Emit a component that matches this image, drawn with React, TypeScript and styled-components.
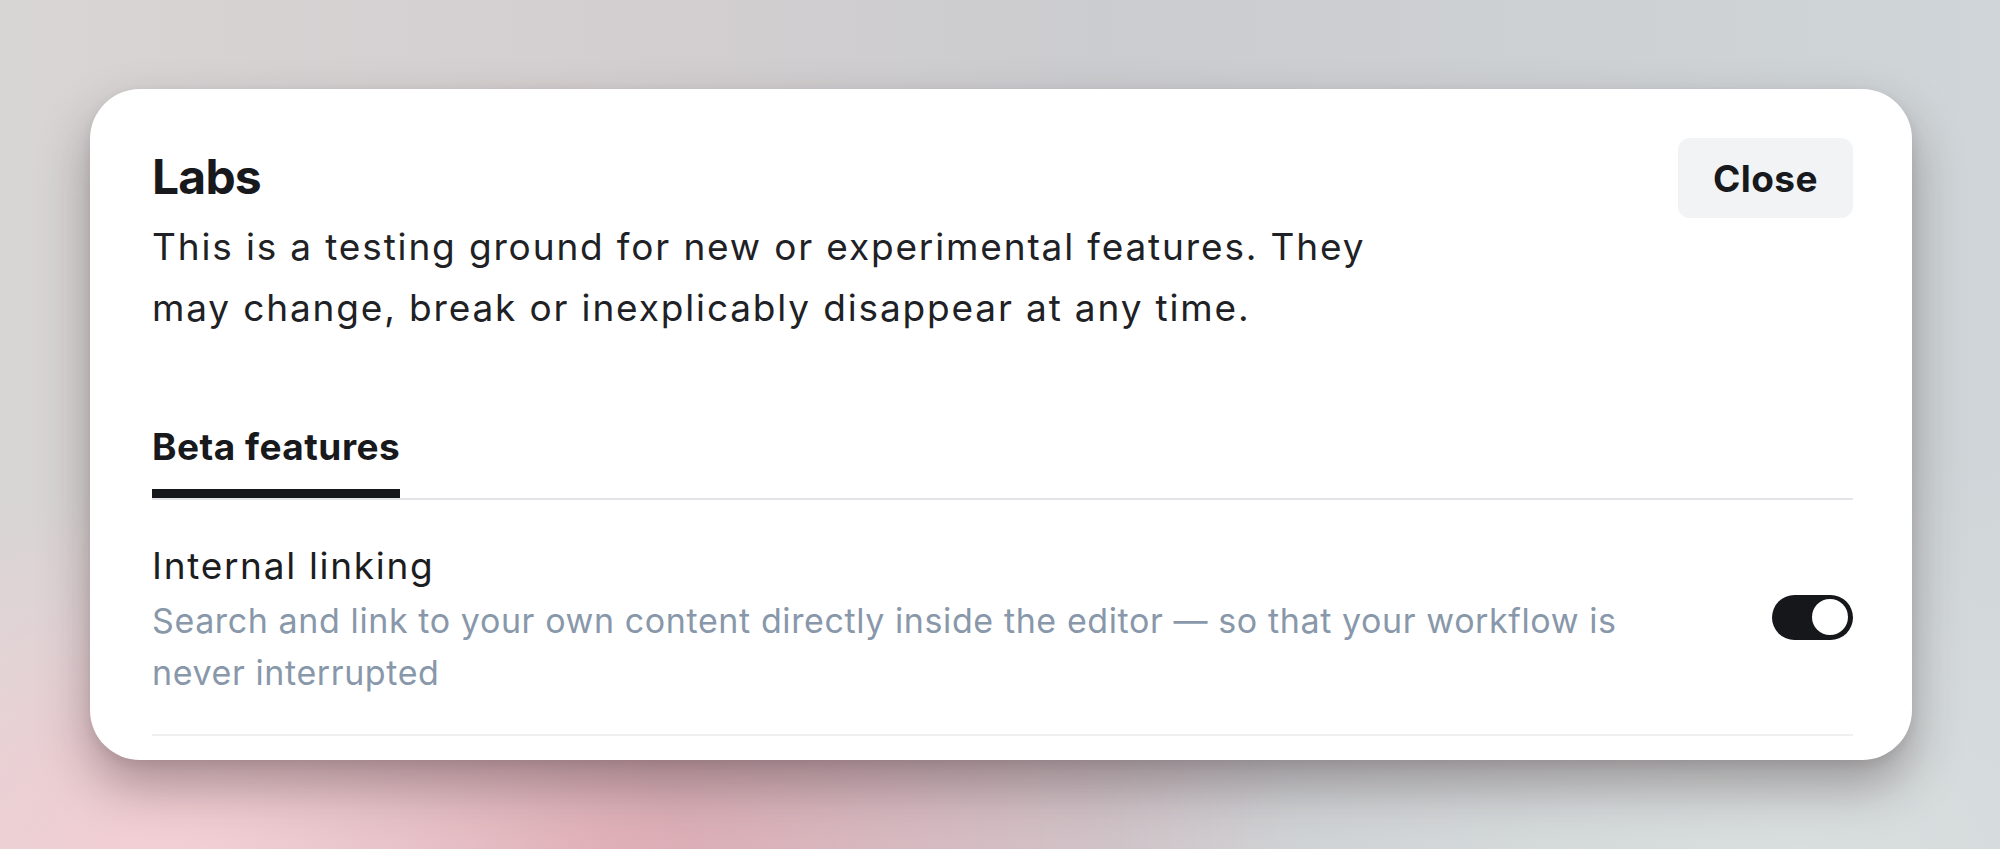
import React, { useState } from 'react';
import styled, { createGlobalStyle } from 'styled-components';

const GlobalStyle = createGlobalStyle`
  html, body {
    margin: 0;
    padding: 0;
  }
  body {
    font-family: Inter, "Noto Sans", "Liberation Sans", sans-serif;
    -webkit-font-smoothing: antialiased;
  }
`;

const Backdrop = styled.div`
  box-sizing: border-box;
  width: 2000px;
  height: 849px;
  overflow: hidden;
  padding: 89px 88px 0 90px;
  background:
    radial-gradient(ellipse 520px 360px at 8% 100%, rgba(244, 208, 213, 0.95) 0%, rgba(244, 208, 213, 0) 100%),
    radial-gradient(ellipse 700px 320px at 30% 100%, rgba(222, 168, 178, 0.95) 0%, rgba(222, 168, 178, 0) 100%),
    radial-gradient(ellipse 700px 420px at 90% 100%, rgba(218, 224, 223, 0.9) 0%, rgba(218, 224, 223, 0) 100%),
    linear-gradient(90deg, #d8d5d5 0%, #d4cfd0 28%, #cbcccf 55%, #cfd5d8 100%);
`;

const Card = styled.section`
  box-sizing: border-box;
  width: 1822px;
  height: 671px;
  background: #ffffff;
  border-radius: 50px;
  padding: 49px 59px 0 62px;
  box-shadow: 0 26px 50px rgba(40, 20, 25, 0.34), 0 4px 12px rgba(40, 20, 25, 0.08);
`;

const Header = styled.header`
  display: flex;
  justify-content: space-between;
  align-items: flex-start;
`;

const Intro = styled.div`
  display: flex;
  flex-direction: column;
  gap: 10px;
  padding-top: 10px;
`;

const Title = styled.h1`
  margin: 0;
  font-size: 48px;
  line-height: 58px;
  font-weight: 700;
  color: #18191c;
  letter-spacing: -0.8px;
`;

const Lead = styled.p`
  margin: 0;
  max-width: 1260px;
  font-size: 37px;
  line-height: 61px;
  font-weight: 400;
  letter-spacing: 1.85px;
  color: #202125;
`;

const CloseButton = styled.button`
  width: 175px;
  height: 80px;
  border: none;
  border-radius: 12px;
  background: #f2f3f5;
  color: #18191c;
  font-family: inherit;
  font-size: 37px;
  font-weight: 700;
  letter-spacing: 0.4px;
  cursor: pointer;
`;

const TabList = styled.nav`
  display: flex;
  margin-top: 86px;
  border-bottom: 2px solid #e2e4e8;
`;

const Tab = styled.div<{ $active?: boolean }>`
  padding-bottom: 19px;
  font-size: 37px;
  line-height: 46px;
  font-weight: 700;
  letter-spacing: 0.5px;
  color: #18191c;
  border-bottom: 9px solid ${(p) => (p.$active ? '#16171b' : 'transparent')};
`;

const FeatureRow = styled.div`
  display: flex;
  align-items: center;
  justify-content: space-between;
  gap: 40px;
  padding: 43px 0 35px;
  border-bottom: 2px solid #eff0f2;
`;

const FeatureText = styled.div`
  display: flex;
  flex-direction: column;
  gap: 6px;
  max-width: 1520px;
`;

const FeatureName = styled.div`
  font-size: 37px;
  line-height: 46px;
  letter-spacing: 1.7px;
  color: #1c1d21;
`;

const FeatureDescription = styled.div`
  font-size: 34px;
  line-height: 52px;
  letter-spacing: 0.6px;
  color: #8898aa;
`;

const Switch = styled.button<{ $on: boolean }>`
  flex: none;
  display: flex;
  align-items: center;
  justify-content: ${(p) => (p.$on ? 'flex-end' : 'flex-start')};
  width: 81px;
  height: 45px;
  padding: 0 5px;
  border: none;
  border-radius: 23px;
  background: ${(p) => (p.$on ? '#16171b' : '#d7dadf')};
  cursor: pointer;
  margin-top: -8px;
`;

const Knob = styled.span`
  width: 36px;
  height: 36px;
  border-radius: 50%;
  background: #ffffff;
`;

const App: React.FC = () => {
  const [linking, setLinking] = useState(true);

  return (
    <>
      <GlobalStyle />
      <Backdrop>
        <Card>
          <Header>
            <Intro>
              <Title>Labs</Title>
              <Lead>
                This is a testing ground for new or experimental features. They may change, break or
                inexplicably disappear at any time.
              </Lead>
            </Intro>
            <CloseButton>Close</CloseButton>
          </Header>
          <TabList>
            <Tab $active>Beta features</Tab>
          </TabList>
          <FeatureRow>
            <FeatureText>
              <FeatureName>Internal linking</FeatureName>
              <FeatureDescription>
                Search and link to your own content directly inside the editor — so that your workflow
                is never interrupted
              </FeatureDescription>
            </FeatureText>
            <Switch $on={linking} onClick={() => setLinking(!linking)}>
              <Knob />
            </Switch>
          </FeatureRow>
        </Card>
      </Backdrop>
    </>
  );
};

export default App;
